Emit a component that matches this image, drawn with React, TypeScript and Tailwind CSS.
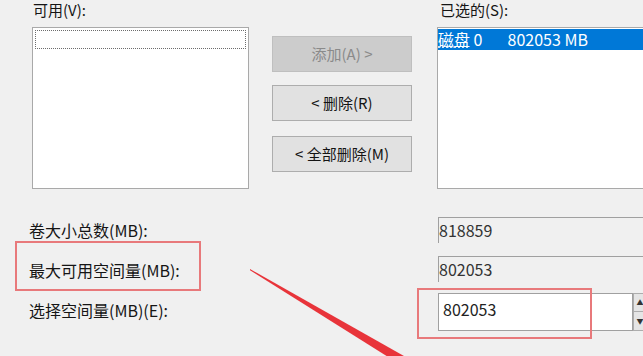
const font = { fontFamily: '"Noto Sans CJK SC", "Noto Sans", sans-serif' };

function DialogButton({ label, disabled = false }: { label: string; disabled?: boolean }) {
  return (
    <div
      className={
        disabled
          ? "h-[36px] flex items-center justify-center border border-[#bfbfbf] bg-[#cccccc] text-[#8a8a8a] text-[15px]"
          : "h-[36px] flex items-center justify-center border border-[#adadad] bg-[#e1e1e1] text-[#141414] text-[15px]"
      }
    >
      {label}
    </div>
  );
}

export default function App() {
  return (
    <div
      className="relative w-[643px] h-[356px] overflow-hidden bg-[#f0f0f0] text-[#151515]"
      style={font}
    >
      {/* lists and move buttons */}
      <div className="flex">
        {/* available */}
        <div className="ml-[32px] w-[217px] shrink-0">
          <div className="ml-[1px] h-[20px] text-[15px] leading-[20px]">可用(V):</div>
          <div className="mt-[7px] h-[162px] border border-[#a9a9a9] bg-white p-[2px]">
            <div className="h-[19px] border border-dotted border-[#6d6d6d]" />
          </div>
        </div>

        {/* buttons */}
        <div className="ml-[23px] w-[140px] shrink-0 flex flex-col pt-[36px]">
          <DialogButton label="添加(A) >" disabled />
          <div className="mt-[13px]">
            <DialogButton label="< 删除(R)" />
          </div>
          <div className="mt-[15px]">
            <DialogButton label="< 全部删除(M)" />
          </div>
        </div>

        {/* selected */}
        <div className="ml-[25px] w-[240px] shrink-0">
          <div className="ml-[3px] h-[20px] text-[15px] leading-[20px]">已选的(S):</div>
          <div className="mt-[7px] h-[162px] border border-[#a9a9a9] bg-white pt-[1px]">
            <div className="h-[21px] bg-[#0078d7] text-white text-[16px] leading-[21px] whitespace-pre">
              <span className="underline decoration-dotted">磁盘</span>{" 0       802053 MB"}
            </div>
          </div>
        </div>
      </div>

      {/* sizes */}
      <div className="mt-[28px] flex flex-col text-[16px]">
        <div className="flex items-center h-[26px]">
          <div className="pl-[29px] w-[438px] shrink-0">卷大小总数(MB):</div>
          <div className="w-[230px] shrink-0 h-[26px] border-t border-l border-[#a0a0a0] bg-[#f0f0f0] leading-[24px] text-[16px] text-[#333]">
            818859
          </div>
        </div>
        <div className="mt-[13px] flex items-center h-[26px]">
          <div className="pl-[29px] w-[438px] shrink-0 pt-[1px]">最大可用空间量(MB):</div>
          <div className="w-[230px] shrink-0 h-[26px] border-t border-l border-[#a0a0a0] bg-[#f0f0f0] leading-[24px] text-[16px] text-[#333]">
            802053
          </div>
        </div>
        <div className="mt-[11px] flex items-start h-[38px]">
          <div className="pl-[29px] w-[438px] shrink-0 pt-[5px]">选择空间量(MB)(E):</div>
          <div className="w-[195px] shrink-0 h-[38px] border border-[#a0a0a0] bg-white pl-[4px] pt-[5px] text-[16px] leading-[20px] text-[#222]">
            802053
          </div>
          <div className="w-[14px] shrink-0 flex flex-col h-[38px]">
            <div className="h-[19px] border border-[#adadad] bg-[#e5e5e5] flex items-center justify-center text-[7px] text-[#333]">▲</div>
            <div className="h-[19px] border border-t-0 border-[#adadad] bg-[#e5e5e5] flex items-center justify-center text-[7px] text-[#333]">▼</div>
          </div>
        </div>
      </div>

      {/* annotations */}
      <div className="absolute left-[15px] top-[241px] w-[186px] h-[50px] border-2 border-[#e8797b]" />
      <div className="absolute left-[417px] top-[288px] w-[175px] h-[51px] border-2 border-[#e8797b]" />
      <svg className="absolute left-0 top-0" width="643" height="356" viewBox="0 0 643 356">
        <polygon points="250,269 407.5,358 402.5,366 250,270.2" fill="#e8343a" />
      </svg>
    </div>
  );
}
